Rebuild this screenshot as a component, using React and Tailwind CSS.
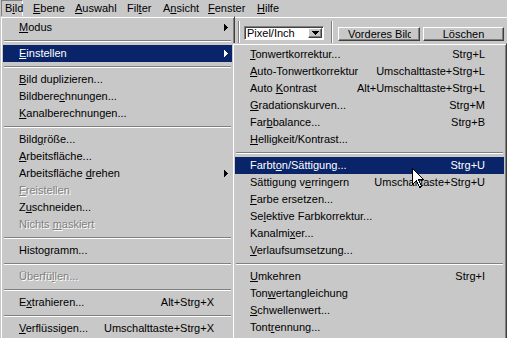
import React from "react";

const SEP = { sep: true };

const leftItems = [
  { l: "Modus", u: 0, arrow: true },
  SEP,
  { l: "Einstellen", u: 0, arrow: true, active: true },
  SEP,
  { l: "Bild duplizieren...", u: 0 },
  { l: "Bildberechnungen...", u: 8 },
  { l: "Kanalberechnungen...", u: 0 },
  SEP,
  { l: "Bildgröße...", u: 4 },
  { l: "Arbeitsfläche...", u: 0 },
  { l: "Arbeitsfläche drehen", u: 14, arrow: true },
  { l: "Freistellen", u: 0, disabled: true },
  { l: "Zuschneiden...", u: 1 },
  { l: "Nichts maskiert", u: 7, disabled: true },
  SEP,
  { l: "Histogramm...", u: 5 },
  SEP,
  { l: "Überfüllen...", u: 6, disabled: true },
  SEP,
  { l: "Extrahieren...", u: 1, sc: "Alt+Strg+X" },
  SEP,
  { l: "Verflüssigen...", u: 0, sc: "Umschalttaste+Strg+X" },
];

const rightItems = [
  { l: "Tonwertkorrektur...", u: 0, sc: "Strg+L" },
  { l: "Auto-Tonwertkorrektur", u: 0, sc: "Umschalttaste+Strg+L" },
  { l: "Auto Kontrast", u: 5, sc: "Alt+Umschalttaste+Strg+L" },
  { l: "Gradationskurven...", u: 0, sc: "Strg+M" },
  { l: "Farbbalance...", u: 3, sc: "Strg+B" },
  { l: "Helligkeit/Kontrast...", u: 0 },
  SEP,
  { l: "Farbton/Sättigung...", u: 5, sc: "Strg+U", active: true },
  { l: "Sättigung verringern", u: 11, sc: "Umschalttaste+Strg+U" },
  { l: "Farbe ersetzen...", u: 0 },
  { l: "Selektive Farbkorrektur...", u: 2 },
  { l: "Kanalmixer...", u: 7 },
  { l: "Verlaufsumsetzung...", u: 0 },
  SEP,
  { l: "Umkehren", u: 0, sc: "Strg+I" },
  { l: "Tonwertangleichung", u: 3 },
  { l: "Schwellenwert...", u: 0 },
  { l: "Tontrennung...", u: 4 },
];

function Mn({ text, u }) {
  if (u == null || u < 0) return <>{text}</>;
  return (
    <>
      {text.slice(0, u)}
      <span className="underline underline-offset-[1px]">{text[u]}</span>
      {text.slice(u + 1)}
    </>
  );
}

function Arrow() {
  return (
    <svg width="4" height="7" viewBox="0 0 4 7" className="absolute right-[4px] top-[5px]" shapeRendering="crispEdges">
      <path d="M0 0h1v7H0zM1 1h1v5H1zM2 2h1v3H2zM3 3h1v1H3z" fill="currentColor" />
    </svg>
  );
}

function Separator() {
  return (
    <div className="flex h-[9px] items-center px-[1px]">
      <div className="h-[2px] w-full border-t border-b border-t-[#808080] border-b-white" />
    </div>
  );
}

function Row({ it, pl, pr }) {
  const base = it.active ? "bg-[#0a246a] text-white" : "text-black";
  return (
    <div className={`relative flex h-[17px] items-center whitespace-nowrap ${base} ${pl} ${pr}`}>
      <span
        className={`flex-1 ${it.disabled ? "text-[#808080] [text-shadow:1px_1px_0_#ffffff]" : ""}`}
      >
        <Mn text={it.l} u={it.u} />
      </span>
      {it.sc && <span>{it.sc}</span>}
      {it.arrow && <Arrow />}
    </div>
  );
}

const menuFrame =
  "border border-t-[#c8c8c8] border-l-[#c8c8c8] border-r-[#404040] border-b-[#404040] shadow-[inset_1px_1px_0_#ffffff,inset_-1px_-1px_0_#808080] p-[2px] bg-[#c8c8c8]";

const raised =
  "border border-t-white border-l-white border-r-[#404040] border-b-[#404040] shadow-[inset_-1px_-1px_0_#808080] bg-[#c8c8c8]";

const sunken =
  "border border-t-[#808080] border-l-[#808080] border-r-white border-b-white shadow-[inset_1px_1px_0_#404040]";

const menubar = [
  { l: "Ebene", u: 0, w: "w-[42px]" },
  { l: "Auswahl", u: 0, w: "w-[52px]" },
  { l: "Filter", u: 3, w: "w-[36px]" },
  { l: "Ansicht", u: 1, w: "w-[45px]" },
  { l: "Fenster", u: 0, w: "w-[49px]" },
  { l: "Hilfe", u: 0, w: "w-[40px]" },
];

export default function App() {
  return (
    <div className="relative h-[338px] w-[507px] overflow-hidden bg-[#c8c8c8] font-['Liberation_Sans',Arial,sans-serif] text-[11px] leading-none text-black">
      {/* Menu bar */}
      <div className="flex h-[17px] items-stretch">
        <div className="ml-[1px] w-[28px]">
          <div className="flex h-[17px] w-[22px] items-center border border-t-[#808080] border-l-[#808080] border-r-white border-b-white pl-[3px]">
            <Mn text="Bild" u={1} />
          </div>
        </div>
        {menubar.map((m) => (
          <div key={m.l} className={`flex items-center pl-[4px] ${m.w}`}>
            <Mn text={m.l} u={m.u} />
          </div>
        ))}
      </div>

      {/* Options toolbar */}
      <div className="flex h-[27px] items-start border-t border-white pl-[238px]">
        <div className="mt-[3px] h-[23px] w-[2px] border-l border-r border-l-[#808080] border-r-white" />
        <div className={`relative ml-[4px] mt-[8px] flex h-[14px] w-[80px] items-center bg-white pl-[2px] ${sunken}`}>
          <span>Pixel/Inch</span>
          <div className={`absolute right-[1px] top-[1px] flex h-[10px] w-[14px] items-center justify-center ${raised}`}>
            <svg width="7" height="4" viewBox="0 0 7 4" shapeRendering="crispEdges">
              <path d="M0 0h7v1H0zM1 1h5v1H1zM2 2h3v1H2zM3 3h1v1H3z" fill="#000" />
            </svg>
          </div>
        </div>
        <div className="ml-[7px] mt-[3px] h-[23px] w-[2px] border-l border-r border-l-[#808080] border-r-white" />
        <div className={`ml-[5px] mt-[9px] flex h-[14px] w-[82px] items-center overflow-hidden pl-[9px] ${raised}`}>
          <span className="block w-[63px] overflow-hidden whitespace-nowrap">Vorderes Bild</span>
        </div>
        <div className={`ml-[3px] mt-[9px] flex h-[14px] w-[81px] items-center justify-center ${raised}`}>
          <span>Löschen</span>
        </div>
      </div>

      {/* Bild menu */}
      <div className={`absolute left-0 top-[16px] h-[340px] w-[235px] ${menuFrame}`}>
        {leftItems.map((it, i) =>
          it.sep ? <Separator key={i} /> : <Row key={i} it={it} pl="pl-[16px]" pr="pr-[18px]" />
        )}
      </div>

      {/* Einstellen submenu */}
      <div className={`absolute left-[232px] top-[43px] h-[310px] w-[275px] ${menuFrame}`}>
        {rightItems.map((it, i) =>
          it.sep ? <Separator key={i} /> : <Row key={i} it={it} pl="pl-[15px]" pr="pr-[19px]" />
        )}
      </div>

      {/* Mouse cursor */}
      <svg
        className="absolute left-[412px] top-[168px]"
        width="13"
        height="21"
        viewBox="0 0 13 21"
        shapeRendering="crispEdges"
      >
        <path
          d="M0.5 0.5 L0.5 16.5 L4.5 12.5 L7.5 19.5 L9.5 18.5 L6.5 11.5 L11.5 11.5 Z"
          fill="#ffffff"
          stroke="#000000"
          strokeWidth="1"
          strokeLinejoin="miter"
        />
      </svg>
    </div>
  );
}
